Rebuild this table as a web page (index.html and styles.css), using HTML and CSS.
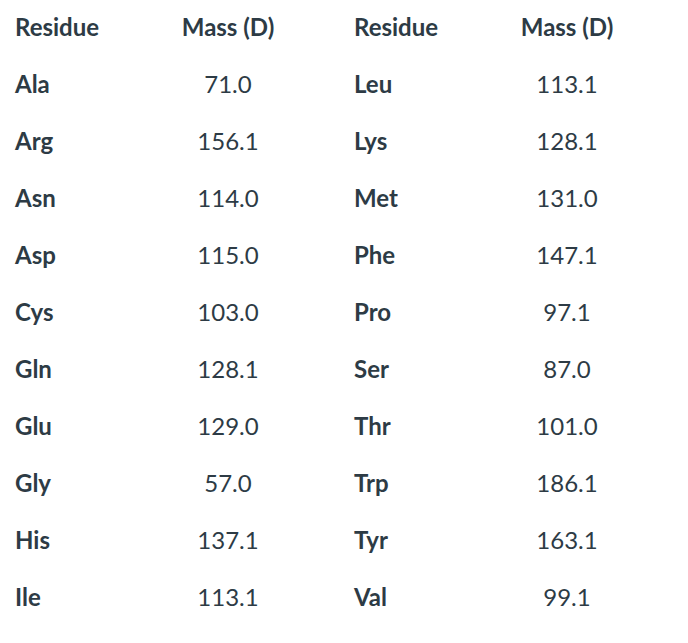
FILE: index.html
```html
<!DOCTYPE html>
<html>
<head>
<meta charset="utf-8">
<link rel="stylesheet" href="styles.css">
</head>
<body>
<div class="table">
  <div class="row head">
    <div class="cell name">Residue</div><div class="cell mass">Mass (D)</div>
    <div class="cell name">Residue</div><div class="cell mass">Mass (D)</div>
  </div>
  <div class="row"><div class="cell name">Ala</div><div class="cell mass">71.0</div><div class="cell name">Leu</div><div class="cell mass">113.1</div></div>
  <div class="row"><div class="cell name">Arg</div><div class="cell mass">156.1</div><div class="cell name">Lys</div><div class="cell mass">128.1</div></div>
  <div class="row"><div class="cell name">Asn</div><div class="cell mass">114.0</div><div class="cell name">Met</div><div class="cell mass">131.0</div></div>
  <div class="row"><div class="cell name">Asp</div><div class="cell mass">115.0</div><div class="cell name">Phe</div><div class="cell mass">147.1</div></div>
  <div class="row"><div class="cell name">Cys</div><div class="cell mass">103.0</div><div class="cell name">Pro</div><div class="cell mass">97.1</div></div>
  <div class="row"><div class="cell name">Gln</div><div class="cell mass">128.1</div><div class="cell name">Ser</div><div class="cell mass">87.0</div></div>
  <div class="row"><div class="cell name">Glu</div><div class="cell mass">129.0</div><div class="cell name">Thr</div><div class="cell mass">101.0</div></div>
  <div class="row"><div class="cell name">Gly</div><div class="cell mass">57.0</div><div class="cell name">Trp</div><div class="cell mass">186.1</div></div>
  <div class="row"><div class="cell name">His</div><div class="cell mass">137.1</div><div class="cell name">Tyr</div><div class="cell mass">163.1</div></div>
  <div class="row"><div class="cell name">Ile</div><div class="cell mass">113.1</div><div class="cell name">Val</div><div class="cell mass">99.1</div></div>
</div>
</body>
</html>
```
FILE: styles.css
```css
html, body {
  margin: 0;
  padding: 0;
  background: #ffffff;
}
body {
  font-family: Lato, "Liberation Sans", sans-serif;
  font-size: 24px;
  color: #2d3b45;
}
.table {
  margin: -2px 0 0 8px;
  width: 678px;
}
.row {
  display: grid;
  grid-template-columns: 101px 238px 101px 238px;
  height: 57px;
  align-items: center;
}
.cell {
  line-height: 26px;
}
.name {
  font-weight: 700;
  padding-left: 7px;
}
.mass {
  text-align: center;
  font-weight: 400;
}
.head .cell {
  font-weight: 700;
}
```
